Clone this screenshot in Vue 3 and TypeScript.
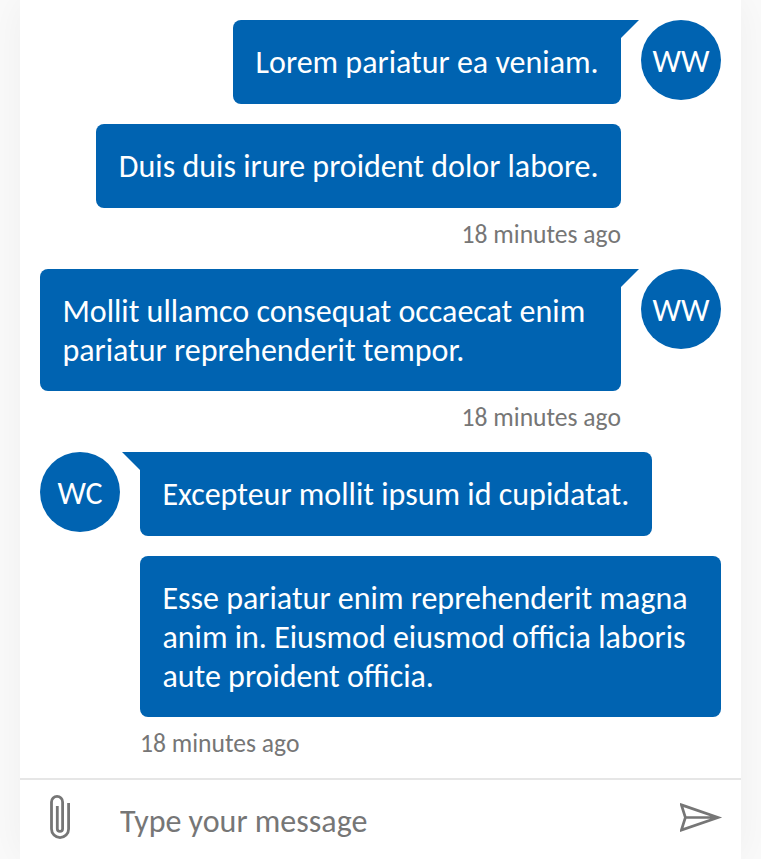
<script setup lang="ts">
interface Message {
  text: string
}
interface Group {
  initials: string
  mine: boolean
  time: string
  messages: Message[]
}

const groups: Group[] = [
  {
    initials: 'WW',
    mine: true,
    time: '18 minutes ago',
    messages: [{ text: 'Lorem pariatur ea veniam.' }, { text: 'Duis duis irure proident dolor labore.' }],
  },
  {
    initials: 'WW',
    mine: true,
    time: '18 minutes ago',
    messages: [{ text: 'Mollit ullamco consequat occaecat enim pariatur reprehenderit tempor.' }],
  },
  {
    initials: 'WC',
    mine: false,
    time: '18 minutes ago',
    messages: [
      { text: 'Excepteur mollit ipsum id cupidatat.' },
      { text: 'Esse pariatur enim reprehenderit magna anim in. Eiusmod eiusmod officia laboris aute proident officia.' },
    ],
  },
]
</script>

<template>
  <div class="page">
    <main class="chat">
      <section class="transcript">
        <article v-for="(group, g) in groups" :key="g" class="group" :class="{ mine: group.mine }">
          <div class="avatar">{{ group.initials }}</div>
          <div class="stack">
            <div v-for="(message, m) in group.messages" :key="m" class="bubble" :class="{ first: m === 0 }">
              {{ message.text }}
            </div>
            <time class="time">{{ group.time }}</time>
          </div>
        </article>
      </section>
      <form class="send-box" @submit.prevent>
        <button type="button" class="icon-button" aria-label="Attach file">
          <svg class="clip" viewBox="0 0 20 44">
            <path d="M7.3 11V33.8a2.65 2.65 0 0 0 5.3 0V7a5.55 5.55 0 0 0-11.1 0V34a8.55 8.55 0 0 0 17.1 0V8" />
          </svg>
        </button>
        <input class="field" type="text" placeholder="Type your message" />
        <button type="submit" class="icon-button" aria-label="Send">
          <svg class="plane" viewBox="0 0 43 29">
            <path d="M1.4 1.9 38 14.5 1.4 27.1 5.4 14.5ZM5.4 14.5H38" />
          </svg>
        </button>
      </form>
    </main>
  </div>
</template>

<style>
body {
  overflow: hidden;
  background: #fafafa;
}
</style>

<style scoped>
.page {
  height: 859px;
  padding: 0 20px;
  overflow: hidden;
  background: #fafafa;
  font-family: Calibri, Carlito, Lato, sans-serif;
  font-size: 32px;
}
.chat {
  height: 860px;
  display: flex;
  flex-direction: column;
  background: #fff;
  box-shadow: 0 0 40px rgba(0, 0, 0, 0.05);
}
.transcript {
  flex: 1;
  padding: 20px 20px 0;
}
.group {
  display: flex;
  gap: 20px;
}
.group.mine {
  flex-direction: row-reverse;
}
.avatar {
  flex: none;
  box-sizing: border-box;
  width: 80px;
  height: 80px;
  padding-top: 2px;
  border-radius: 50%;
  display: flex;
  align-items: center;
  justify-content: center;
  background: #0063b1;
  color: #fff;
}
.stack {
  flex: 1;
  display: flex;
  flex-direction: column;
  align-items: flex-start;
}
.mine .stack {
  align-items: flex-end;
}
.bubble {
  position: relative;
  box-sizing: border-box;
  min-height: 84px;
  padding: 23px 22.4px 21px;
  border-radius: 8px;
  background: #0063b1;
  color: #fff;
  line-height: 39px;
}
.bubble + .bubble {
  margin-top: 20px;
}
.bubble.first {
  border-top-left-radius: 0;
}
.mine .bubble.first {
  border-radius: 8px 0 8px 8px;
}
.bubble.first::after {
  content: '';
  position: absolute;
  top: 0;
  right: 100%;
  width: 18px;
  height: 18px;
  background: #0063b1;
  clip-path: polygon(0 0, 100% 0, 100% 100%);
}
.mine .bubble.first::after {
  right: auto;
  left: 100%;
  clip-path: polygon(0 0, 100% 0, 0 100%);
}
.time {
  padding: 11px 0 19px;
  font-size: 25.6px;
  line-height: 31px;
  color: #767676;
}
.send-box {
  flex: none;
  height: 80px;
  display: flex;
  border-top: 2px solid #e6e6e6;
}
.icon-button {
  flex: none;
  width: 80px;
  padding: 0 0 6px;
  border: 0;
  background: none;
  display: flex;
  align-items: center;
  justify-content: center;
}
.icon-button svg {
  fill: none;
  stroke: #767676;
}
.clip {
  width: 20px;
  height: 44px;
  stroke-width: 2.8;
}
.plane {
  width: 43px;
  height: 29px;
  stroke-width: 2.7;
}
.field {
  flex: 1;
  min-width: 0;
  padding: 2px 20px 0;
  border: 0;
  outline: 0;
  background: none;
  font: inherit;
}
.field::placeholder {
  color: #767676;
  opacity: 1;
}
</style>
